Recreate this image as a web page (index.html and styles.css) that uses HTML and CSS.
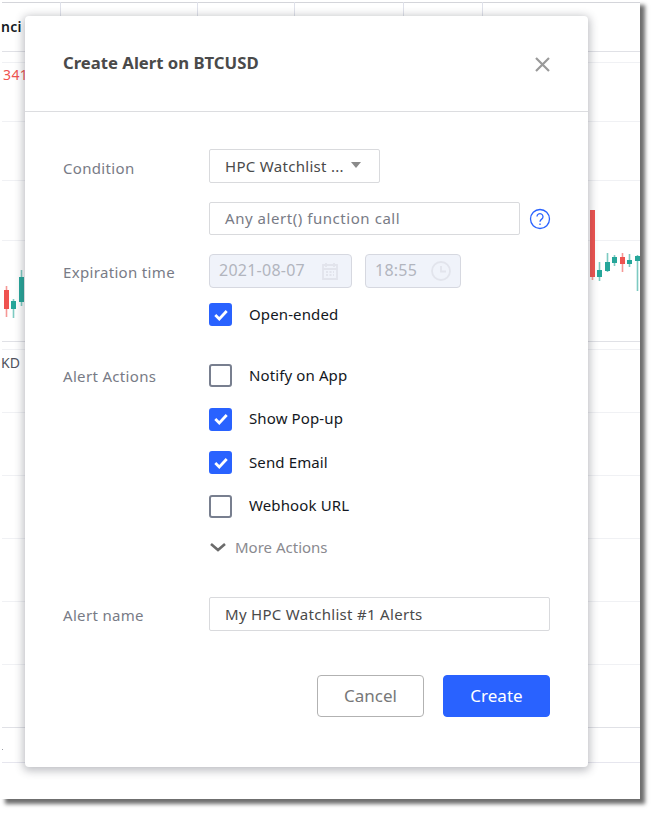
FILE: index.html
```html
<!DOCTYPE html>
<html lang="en">
<head>
<meta charset="utf-8">
<title>Create Alert on BTCUSD</title>
<link rel="stylesheet" href="styles.css">
</head>
<body>
<div class="shot">
  <div class="backdrop">
    <i class="hl hl-top"></i><i class="hl hl-51"></i><i class="hl hl-62 faint"></i><i class="hl hl-121 faint"></i><i class="hl hl-180 faint"></i><i class="hl hl-240 faint"></i><i class="hl hl-341"></i><i class="hl hl-349 faint"></i><i class="hl hl-412 faint"></i><i class="hl hl-475 faint"></i><i class="hl hl-538 faint"></i><i class="hl hl-601 faint"></i><i class="hl hl-664 faint"></i><i class="hl hl-727"></i><i class="hl hl-762"></i>
    <i class="vl vl-60"></i><i class="vl vl-197"></i><i class="vl vl-294"></i><i class="vl vl-403"></i><i class="vl vl-482"></i>
    <span class="bg-text bg-head">nci</span>
    <span class="bg-text bg-peek">0.0</span>
    <span class="bg-text bg-red">341</span>
    <span class="bg-text bg-kd">KD</span>
    <i class="bg-dot"></i>
    <svg class="candles" width="654" height="813" viewBox="0 0 654 813" aria-hidden="true">
      <g class="red">
        <path class="wick" d="M6.500 286V317"/><rect x="4" y="290" width="5" height="19"/>
        <path class="wick" d="M592.500 277V280"/><rect x="590" y="210" width="5" height="67"/>
        <path class="wick" d="M622.500 253V272"/><rect x="620" y="257" width="5" height="7"/>
      </g>
      <g class="green">
        <path class="wick" d="M13.500 299V318"/><rect x="11" y="301" width="5" height="8"/>
        <path class="wick" d="M21.500 270V306"/><rect x="19" y="277" width="5" height="25"/>
        <path class="wick" d="M599.500 262V281"/><rect x="597" y="270" width="5" height="7"/>
        <path class="wick" d="M607.500 253V272"/><rect x="605" y="262" width="5" height="9"/>
        <path class="wick" d="M614.500 255V266"/><rect x="612" y="257" width="5" height="6"/>
        <path class="wick" d="M629.500 254V267"/><rect x="627" y="260" width="5" height="4"/>
        <path class="wick" d="M637.500 255V291"/><rect x="635" y="256" width="5" height="5"/>
      </g>
    </svg>
  </div>

  <section class="modal">
    <header class="modal-head">
      <h1 class="modal-title">Create Alert on BTCUSD</h1>
      <svg class="close" width="17" height="17" viewBox="0 0 17 17" aria-label="Close"><path d="M2 2l13 13M15 2L2 15"/></svg>
    </header>

    <div class="modal-body">
      <div class="row row-condition">
        <div class="label label-condition">Condition</div>
        <div class="fields">
          <div class="field select">
            <span>HPC Watchlist ...</span>
            <i class="caret"></i>
          </div>
          <div class="with-help">
            <div class="field alert-call placeholder">Any alert() function call</div>
            <svg class="help" width="22" height="22" viewBox="0 0 22 22" aria-label="Help"><circle cx="11" cy="11" r="9.500"/><path d="M8 8.600a3 3 0 1 1 4.700 2.500c-1.100.8-1.700 1.300-1.700 2.700"/><path d="M11 15.500v1.500"/></svg>
          </div>
        </div>
      </div>

      <div class="row row-expire">
        <div class="label label-expire">Expiration time</div>
        <div class="fields fields-tight">
          <div class="date-row">
            <div class="field disabled date">
              <span>2021-08-07</span>
              <svg width="20" height="20" viewBox="0 0 20 20" aria-hidden="true"><path class="cal" d="M3 4h14v14H3zM3 8h14M6 2v4M14 2v4"/><path class="cal dots" d="M6 11h8M6 14h8"/></svg>
            </div>
            <div class="field disabled time">
              <span>18:55</span>
              <svg width="20" height="20" viewBox="0 0 20 20" aria-hidden="true"><circle class="cal" cx="10" cy="10" r="9"/><path class="cal" d="M10 5v5.500h5"/></svg>
            </div>
          </div>
          <label class="check"><span class="box on"><svg width="16" height="14" viewBox="0 0 14 12"><path d="M2 6l3.500 3.500L12 2.500"/></svg></span><span class="check-text">Open-ended</span></label>
        </div>
      </div>

      <div class="row row-actions">
        <div class="label label-actions">Alert Actions</div>
        <div class="fields fields-checks">
          <label class="check"><span class="box"></span><span class="check-text">Notify on App</span></label>
          <label class="check"><span class="box on"><svg width="16" height="14" viewBox="0 0 14 12"><path d="M2 6l3.500 3.500L12 2.500"/></svg></span><span class="check-text">Show Pop-up</span></label>
          <label class="check"><span class="box on"><svg width="16" height="14" viewBox="0 0 14 12"><path d="M2 6l3.500 3.500L12 2.500"/></svg></span><span class="check-text">Send Email</span></label>
          <label class="check"><span class="box"></span><span class="check-text">Webhook URL</span></label>
          <div class="more"><svg width="18" height="10" viewBox="0 0 18 10" aria-hidden="true"><path d="M2 2l7 6 7-6"/></svg><span>More Actions</span></div>
        </div>
      </div>

      <div class="row row-name">
        <div class="label label-name">Alert name</div>
        <div class="fields">
          <div class="field name-input">My HPC Watchlist #1 Alerts</div>
        </div>
      </div>

      <div class="buttons">
        <button class="btn btn-cancel" type="button">Cancel</button>
        <button class="btn btn-create" type="button">Create</button>
      </div>
    </div>
  </section>
</div>
</body>
</html>
```

FILE: styles.css
```css
* { box-sizing: border-box; }
html, body { margin: 0; padding: 0; background: #fff; }
body {
  width: 654px;
  height: 813px;
  overflow: hidden;
  font-family: "Noto Sans", "Liberation Sans", sans-serif;
}
.shot {
  position: relative;
  width: 640px;
  height: 799px;
  background: #fff;
  box-shadow: 5px 5px 4px 0 #6e6e6e;
}
.backdrop { position: absolute; inset: 0; overflow: hidden; background: #fff; }
.hl { position: absolute; left: 2px; right: 0; height: 1px; background: #f0f1f4; }
.hl.hl-top { top: 2px; left: 2px; background: #d4d5da; }
.hl-51 { top: 51px; background: #e0e1e6; }
.hl-62 { top: 62px; }
.hl-121 { top: 121px; }
.hl-180 { top: 180px; }
.hl-240 { top: 240px; }
.hl-341 { top: 341px; background: #e0e1e6; }
.hl-349 { top: 349px; }
.hl-412 { top: 412px; }
.hl-475 { top: 475px; }
.hl-538 { top: 538px; }
.hl-601 { top: 601px; }
.hl-664 { top: 664px; }
.hl-727 { top: 727px; background: #e0e1e6; }
.hl-762 { top: 762px; background: #e6e6ee; }
.vl { position: absolute; top: 2px; width: 1px; height: 50px; background: #dfe1ea; }
.vl-60 { left: 60px; }
.vl-197 { left: 197px; }
.vl-294 { left: 294px; }
.vl-403 { left: 403px; }
.vl-482 { left: 482px; }
.bg-text { position: absolute; font-size: 14px; line-height: 18px; }
.bg-head { left: 1px; top: 18px; color: #131722; font-weight: 600; letter-spacing: .3px; }
.bg-peek { left: 213px; top: 12px; color: #50535e; letter-spacing: 1px; }
.bg-red { left: 3px; top: 66px; color: #ef5350; letter-spacing: .4px; }
.bg-kd { left: 1px; top: 354px; color: #50535e; }
.bg-dot { position: absolute; left: 2px; top: 749px; width: 1px; height: 1px; background: #9a9ca5; }
.candles { position: absolute; left: 0; top: 0; }
.candles .wick { fill: none; stroke-width: 1.600; opacity: .6; }
.red { fill: #ef5350; stroke: #ef5350; }
.green { fill: #26a69a; stroke: #26a69a; }
.candles rect { stroke: none; }

.modal {
  position: absolute;
  left: 25px;
  top: 16px;
  width: 563px;
  height: 751px;
  background: #fff;
  border-radius: 4px;
  box-shadow: 0 2px 9px 2px rgba(60, 62, 75, .32);
}
.modal-head {
  display: flex;
  align-items: center;
  justify-content: space-between;
  height: 96px;
  padding: 0 37px 0 38px;
  border-bottom: 1px solid #dcdde0;
}
.modal-title {
  margin: 0 0 2px;
  font-size: 16.700px;
  line-height: 24px;
  font-weight: 700;
  color: #4a4a4a;
}
.close { margin-top: 1px; }
.close path { fill: none; stroke: #9a9a9a; stroke-width: 2.200; }

.modal-body { padding: 37px 38px 0; }
.row { display: flex; }
.label {
  flex: 0 0 146px;
  font-size: 15px;
  line-height: 20px;
  letter-spacing: .33px;
  color: #787b86;
}
.fields { flex: 1; display: flex; flex-direction: column; align-items: flex-start; }
.label-condition { padding-top: 9px; }
.label-expire { padding-top: 8px; }
.label-actions { padding-top: 2px; }
.label-name { padding-top: 8px; }
.row-expire { margin-top: 19px; }
.row-actions { margin-top: 38px; }
.row-name { margin-top: 40px; }

.field {
  display: flex;
  align-items: center;
  height: 34px;
  padding: 0 15px;
  background: #fff;
  border: 1px solid #d9dadd;
  border-radius: 2px;
  font-size: 15px;
  letter-spacing: .3px;
  color: #4a4a4a;
  white-space: nowrap;
}
.select { width: 171px; justify-content: space-between; padding-right: 18px; }
.caret {
  width: 0; height: 0;
  border-left: 5.500px solid transparent;
  border-right: 5.500px solid transparent;
  border-top: 6px solid #8a8a8a;
  margin-bottom: 2px;
}
.with-help { display: flex; align-items: center; gap: 8px; margin-top: 19px; }
.alert-call { width: 311px; height: 33px; padding-bottom: 2px; letter-spacing: .55px; }
.placeholder { color: #787b86; }
.help { margin-left: 1px; }
.help circle, .help path { fill: none; stroke: #2962ff; stroke-width: 1.300; }

.date-row { display: flex; gap: 13px; }
.disabled {
  justify-content: space-between;
  padding: 0 9px 2px;
  background: #f0f3fa;
  border-color: #d6d8e0;
  border-radius: 4px;
  font-size: 16px;
  letter-spacing: .25px;
  color: #b2b5be;
}
.date { width: 143px; padding-right: 11px; }
.time { width: 96px; }
.disabled svg { margin-top: 2px; }
.cal { fill: none; stroke: #e2e4ec; stroke-width: 1.800; }
.cal.dots { stroke-dasharray: 2 1.500; }

.check {
  display: flex;
  align-items: center;
  height: 23px;
  font-size: 15px;
  color: #131722;
}
.check-text { margin-top: -2px; letter-spacing: .12px; }
.fields-tight .check { margin-top: 15px; }
.box {
  display: flex;
  align-items: center;
  justify-content: center;
  width: 23px;
  height: 23px;
  margin-right: 17px;
  border: 2px solid #787f8f;
  border-radius: 3px;
  background: #fff;
}
.box.on { background: #2962ff; border-color: #2962ff; }
.box path { fill: none; stroke: #fff; stroke-width: 2.400; }
.fields-checks { gap: 20.500px; }
.more {
  display: flex;
  align-items: center;
  gap: 8px;
  height: 20px;
  margin-top: -1px;
  font-size: 15px;
  color: #8a8a8f;
}
.more path { fill: none; stroke: #6b6b6b; stroke-width: 2.600; }
.name-input { width: 341px; }

.buttons { display: flex; justify-content: flex-end; gap: 19px; margin-top: 44px; }
.btn {
  width: 107px;
  height: 42px;
  padding: 0 0 2px;
  border-radius: 4px;
  font-family: inherit;
  font-size: 17px;
}
.btn-cancel { background: #fff; border: 1px solid #b2b2b2; color: #787878; }
.btn-create { background: #2962ff; border: 1px solid #2962ff; color: #fff; }
```
